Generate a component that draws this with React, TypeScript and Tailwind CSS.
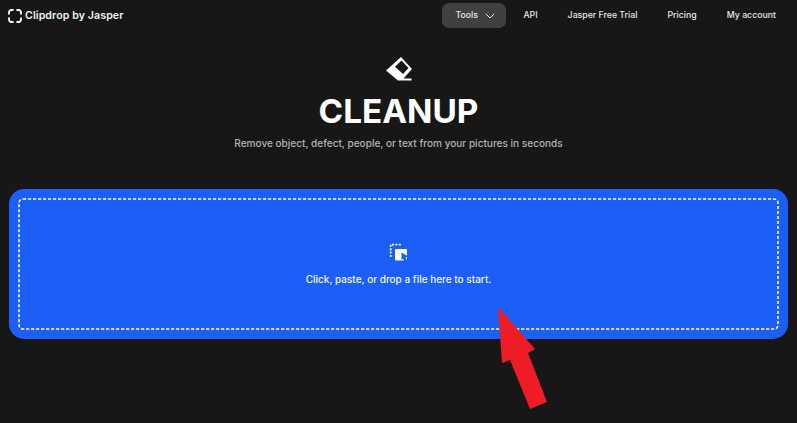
export default function App() {
  return (
    <div className="relative h-screen w-full overflow-hidden bg-[#171717] font-['Inter',sans-serif] text-white">
      {/* Header */}
      <header className="flex h-[32px] items-start justify-between pl-[8px] pr-[21px] pt-[3px]">
        <div className="flex h-[26px] items-center gap-[3px]">
          <svg width="14" height="14" viewBox="0 0 14 14" fill="none" stroke="white" strokeWidth="1.8">
            <path d="M1 5.5V3.5A2.5 2.5 0 0 1 3.5 1h2M8.5 1h2A2.5 2.5 0 0 1 13 3.5v2M13 8.5v2a2.5 2.5 0 0 1-2.5 2.5h-2M5.5 13h-2A2.5 2.5 0 0 1 1 10.5v-2" />
          </svg>
          <span className="text-[10.6px] font-semibold leading-none tracking-[0.1px] text-[#f2f2f2]">Clipdrop by Jasper</span>
        </div>
        <nav className="flex items-center text-[8.75px] font-medium text-[#e8e8e8]">
          <button className="flex h-[25px] w-[64px] items-center gap-[7px] rounded-[7px] bg-[#404040] pl-[13px]">
            Tools
            <svg width="10" height="6" viewBox="0 0 10 6" fill="none" stroke="#e8e8e8" strokeWidth="1">
              <path d="M0.7 0.7 5 5 9.3 0.7" />
            </svg>
          </button>
          <a className="ml-[17px]">API</a>
          <a className="ml-[30px]">Jasper Free Trial</a>
          <a className="ml-[30px]">Pricing</a>
          <a className="ml-[30px]">My account</a>
        </nav>
      </header>

      {/* Title */}
      <div className="flex flex-col items-center">
        <svg className="mt-[24px]" width="28" height="25" viewBox="384 56 28 25" fill="white">
          <path d="M400 57 411 69 402.5 78.5H410.5V80.5H397L385 70.5z" />
          <path d="M400.5 60.5 407.5 68 402 74 394 66.7z" fill="#171717" />
        </svg>
        <h1 className="mt-[11px] text-[33.3px] font-bold leading-[39px]">CLEANUP</h1>
        <p className="mt-[5px] text-[10.05px] font-medium leading-[14px] text-[#b3b3b3]">
          Remove object, defect, people, or text from your pictures in seconds
        </p>
      </div>

      {/* Drop zone */}
      <div className="relative mx-[9px] mt-[39px] h-[150px] rounded-[15px] bg-[#1b5ff6] p-[10px]">
        <svg className="absolute left-[9px] top-[9px]" width="761" height="132" fill="none">
          <rect x="1" y="1" width="759" height="130" rx="4" stroke="white" strokeWidth="1.6" strokeDasharray="3.2 1.8" />
        </svg>
        <div className="flex h-full flex-col items-center pt-[44px]">
          <svg width="20" height="18" viewBox="389 243 20 18">
            <path d="M390.7 257V244.7H402" fill="none" stroke="white" strokeWidth="1.7" strokeDasharray="2 1.4" />
            <rect x="395" y="249" width="12" height="11.5" rx="0.8" fill="white" />
            <path d="M401.5 252.5 408.5 256.5 405.5 257.5 407.5 261H404L403 258.5 401.5 260z" fill="#1b5ff6" />
          </svg>
          <p className="mt-[11px] text-[10px] font-medium leading-[14px] text-[#f4f7ff]">Click, paste, or drop a file here to start.</p>
        </div>
      </div>

      {/* Annotation arrow drawn over the screenshot */}
      <svg className="absolute left-[490px] top-[300px]" width="70" height="115" viewBox="490 300 70 115">
        <path d="M498 307 535 349 528 353 547 402 530 409 510 360 502 363z" fill="#ee1c25" />
      </svg>
    </div>
  );
}
